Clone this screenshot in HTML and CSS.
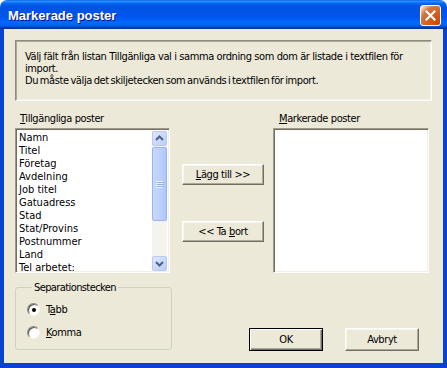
FILE: index.html
```html
<!DOCTYPE html>
<html lang="sv">
<head>
<meta charset="utf-8">
<title>Markerade poster</title>
<link rel="stylesheet" href="styles.css">
</head>
<body>
<div class="window">
  <div class="titlebar">
    <span class="title">Markerade poster</span>
    <span class="close">
      <svg width="11" height="11" viewBox="0 0 11 11"><path d="M1.5 1.5 L9.5 9.5 M9.5 1.5 L1.5 9.5" stroke="#fff" stroke-width="2.2" stroke-linecap="square"/></svg>
    </span>
  </div>
  <div class="frame">
    <div class="client">
      <div class="info">
        <p class="first">Välj fält från listan Tillgänliga val i samma ordning som dom är listade i textfilen för<br>import.</p>
        <p>Du måste välja det skiljetecken som används i textfilen för import.</p>
      </div>
      <div class="lists">
        <div class="col-left">
          <div class="lbl"><u>T</u>illgängliga poster</div>
          <div class="listbox">
            <ul class="items">
              <li>Namn</li>
              <li>Titel</li>
              <li>Företag</li>
              <li>Avdelning</li>
              <li>Job titel</li>
              <li>Gatuadress</li>
              <li>Stad</li>
              <li>Stat/Provins</li>
              <li>Postnummer</li>
              <li>Land</li>
              <li>Tel arbetet:</li>
            </ul>
            <div class="scrollbar">
              <div class="sb-btn">
                <svg width="13" height="13" viewBox="0 0 13 13"><path d="M3 8 L6.5 4.5 L10 8" fill="none" stroke="#4d6185" stroke-width="2"/></svg>
              </div>
              <div class="sb-thumb">
                <svg width="8" height="8" viewBox="0 0 8 8"><path d="M0 1.5H7M0 3.5H7M0 5.5H7M0 7.5H7" stroke="#eef4fe" stroke-width="1"/><path d="M1 2.5H8M1 4.5H8M1 6.5H8" stroke="#8cb0f8" stroke-width="1"/></svg>
              </div>
              <div class="sb-track"></div>
              <div class="sb-btn">
                <svg width="13" height="13" viewBox="0 0 13 13"><path d="M3 5 L6.5 8.5 L10 5" fill="none" stroke="#4d6185" stroke-width="2"/></svg>
              </div>
            </div>
          </div>
        </div>
        <div class="col-mid">
          <button class="btn move"><u>L</u>ägg till &gt;&gt;</button>
          <button class="btn move">&lt;&lt; Ta <u>b</u>ort</button>
        </div>
        <div class="col-right">
          <div class="lbl"><u>M</u>arkerade poster</div>
          <div class="listbox empty"></div>
        </div>
      </div>
      <div class="bottom">
        <fieldset class="group">
          <legend>Separationstecken</legend>
          <div class="radio-row"><span class="radio checked"></span><span>T<u>a</u>bb</span></div>
          <div class="radio-row"><span class="radio"></span><span><u>K</u>omma</span></div>
        </fieldset>
        <div class="actions">
          <button class="btn dlg default">OK</button>
          <button class="btn dlg">Avbryt</button>
        </div>
      </div>
    </div>
  </div>
</div>
</body>
</html>
```

FILE: styles.css
```css
* { box-sizing: border-box; }
html, body { margin: 0; padding: 0; background: #ffffff; }
body {
  font-family: "DejaVu Sans Condensed", "DejaVu Sans", "Liberation Sans", sans-serif;
  font-stretch: condensed;
  font-size: 11px;
  letter-spacing: -0.4px;
  color: #000;
}
.window { width: 447px; height: 368px; display: flex; flex-direction: column; }
.titlebar {
  height: 29px;
  flex: none;
  display: flex;
  align-items: center;
  border-radius: 7px 7px 0 0;
  background: linear-gradient(to bottom, #0058ee 0%, #3593ff 4%, #288eff 6%, #127dff 8%, #036ffc 10%, #0262ee 14%, #0057e5 20%, #0054e3 24%, #0055eb 56%, #005bf5 66%, #026afe 76%, #0062ef 86%, #0052d6 92%, #0040ab 94%, #003092 100%);
}
.title {
  font-family: "Liberation Sans", "DejaVu Sans", sans-serif;
  font-stretch: normal;
  letter-spacing: 0;
  font-weight: bold;
  font-size: 13px;
  color: #fff;
  padding-left: 8px;
  padding-top: 1px;
  text-shadow: 1px 1px #0f1089;
  flex: 1;
}
.close {
  width: 21px; height: 21px;
  margin-right: 6px;
  margin-top: 1px;
  border: 1px solid #fff;
  border-radius: 3px;
  display: flex; align-items: center; justify-content: center;
  background: radial-gradient(circle at 90% 90%, #cc4600 0%, #dc6527 55%, #cd7546 70%, #ffccb2 90%, #fff 100%);
}
.frame {
  flex: 1;
  border-left: 4px solid #0842d4;
  border-right: 4px solid #0842d4;
  border-bottom: 5px solid #0842d4;
  box-shadow: inset 1px 0 #0531c8, inset -1px 0 #0531c8;
  background: #ece9d8;
}
.client { height: 100%; background: #ece9d8; display: flex; flex-direction: column; }

.info {
  margin: 11px 11px 0 11px;
  width: 417px;
  height: 61px;
  border: 1px solid;
  border-color: #8e8c80 #ffffff #ffffff #8e8c80;
  box-shadow: inset 1px 1px #aca899, inset -1px -1px #f3f2ea;
  padding: 10px 4px 0 9px;
  line-height: 12px;
  word-spacing: -1px;
  white-space: nowrap;
}
.info p { margin: 0; }
.info .first { word-spacing: 0; }

.lists { display: flex; margin: 8px 0 0 11px; }
.col-left { width: 155px; }
.lbl { height: 19px; padding: 2px 0 0 5px; line-height: 15px; }
.listbox {
  height: 145px;
  background: #fff;
  border: 1px solid;
  border-color: #9d9a8a #ffffff #ffffff #9d9a8a;
  box-shadow: inset 1px 1px #716f64, inset -1px -1px #f1efe2;
  display: flex;
  padding: 2px 2px 1px 2px;
}
.items { list-style: none; margin: 0; padding: 0 0 0 1px; flex: 1; overflow: hidden; line-height: 13px; letter-spacing: 0; }
.items li { height: 13px; white-space: nowrap; }
.scrollbar {
  width: 15px;
  display: flex;
  flex-direction: column;
  background: #f4f3ee;
}
.sb-btn {
  height: 15px;
  flex: none;
  border: 1px solid #b6caf5;
  border-radius: 2px;
  background: linear-gradient(135deg, #dfe8fe, #b9cdf9);
  display: flex; align-items: center; justify-content: center;
}
.sb-thumb {
  height: 74px;
  flex: none;
  margin-top: 1px;
  border: 1px solid #9cb3ec;
  border-radius: 2px;
  background: linear-gradient(to right, #c7d6fc, #bcd0fb 60%, #b1c6f8);
  display: flex; align-items: center; justify-content: center;
}
.sb-track { flex: 1; }

.col-mid { width: 82px; margin-left: 12px; padding-top: 55px; display: flex; flex-direction: column; gap: 36px; }
.btn {
  font: inherit;
  letter-spacing: inherit;
  color: #000;
  background: #ece9d8;
  border: 1px solid;
  border-color: #ffffff #716f64 #716f64 #ffffff;
  box-shadow: inset -1px -1px #aca899, inset 1px 1px #f6f5ef;
  padding: 0;
  line-height: 15px;
}
.move { width: 82px; height: 21px; }
.col-right { width: 156px; margin-left: 9px; }
.col-right .lbl { padding-left: 6px; }
.empty { display: block; }

.bottom { display: flex; margin: 7px 0 0 11px; }
.group {
  margin: 0;
  width: 157px;
  height: 70px;
  border: 1px solid #d0d0bf;
  border-radius: 3px;
  padding: 3px 0 0 11px;
}
.group legend { padding: 0 2px; margin-left: 5px; line-height: 15px; letter-spacing: -0.6px; }
.radio-row { display: flex; align-items: center; gap: 6px; height: 23px; }
.radio {
  width: 13px; height: 13px;
  border-radius: 50%;
  background: #fff;
  border: 1px solid;
  border-color: #8a887c #f6f5ef #f6f5ef #8a887c;
  box-shadow: inset 1px 1px #55534b;
  display: flex; align-items: center; justify-content: center;
}
.radio.checked::after {
  content: "";
  width: 4px; height: 4px;
  border-radius: 50%;
  background: #000;
}
.actions { margin-left: auto; margin-right: 24px; padding-top: 48px; display: flex; gap: 22px; }
.dlg { width: 74px; height: 23px; }
.default {
  border: 1px solid #000;
  box-shadow: inset 1px 1px #fff, inset -1px -1px #716f64, inset -2px -2px #aca899;
}
```
